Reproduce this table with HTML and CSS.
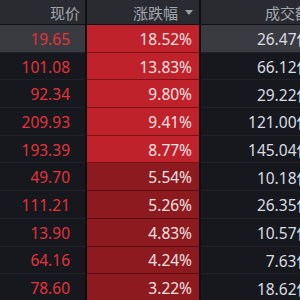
FILE: index.html
```html
<!DOCTYPE html>
<html lang="zh">
<head>
<meta charset="utf-8">
<link rel="stylesheet" href="styles.css">
</head>
<body>
<div class="table">
  <div class="hd c1">现价</div>
  <div class="hd c2">涨跌幅<svg class="sort" width="8" height="5" viewBox="0 0 8 5"><path d="M0 0H8L4 5Z" fill="#9a9ea6"/></svg></div>
  <div class="hd c3">成交额</div>

  <div class="cell c1 price sel">19.65</div>
  <div class="cell c2 up hot">18.52%</div>
  <div class="cell c3 amt sel">26.47亿</div>

  <div class="cell c1 price">101.08</div>
  <div class="cell c2 up hot">13.83%</div>
  <div class="cell c3 amt">66.12亿</div>

  <div class="cell c1 price">92.34</div>
  <div class="cell c2 up hot">9.80%</div>
  <div class="cell c3 amt">29.22亿</div>

  <div class="cell c1 price">209.93</div>
  <div class="cell c2 up hot">9.41%</div>
  <div class="cell c3 amt">121.00亿</div>

  <div class="cell c1 price">193.39</div>
  <div class="cell c2 up hot">8.77%</div>
  <div class="cell c3 amt">145.04亿</div>

  <div class="cell c1 price">49.70</div>
  <div class="cell c2 up warm">5.54%</div>
  <div class="cell c3 amt">10.18亿</div>

  <div class="cell c1 price">111.21</div>
  <div class="cell c2 up warm">5.26%</div>
  <div class="cell c3 amt">26.35亿</div>

  <div class="cell c1 price">13.90</div>
  <div class="cell c2 up warm">4.83%</div>
  <div class="cell c3 amt">10.57亿</div>

  <div class="cell c1 price">64.16</div>
  <div class="cell c2 up warm">4.24%</div>
  <div class="cell c3 amt">7.63亿</div>

  <div class="cell c1 price">78.60</div>
  <div class="cell c2 up warm">3.22%</div>
  <div class="cell c3 amt">18.62亿</div>
</div>
</body>
</html>
```

FILE: styles.css
```css
html, body {
  margin: 0;
  padding: 0;
  background: #16181d;
  overflow: hidden;
  width: 300px;
  height: 300px;
}
.table {
  display: grid;
  grid-template-columns: 85px 112px 120px;
  column-gap: 2px;
  background: #0e0f12;
  width: 321px;
  font-family: "Noto Sans", "Noto Sans CJK SC", sans-serif;
  font-size: 15.5px;
}
.hd {
  height: 24px;
  border-bottom: 1px solid #111215;
  background: #2a2b30;
  color: #a3a7af;
  display: flex;
  align-items: center;
  justify-content: flex-end;
  font-family: "Noto Sans CJK SC", sans-serif;
  font-size: 15px;
}
.hd.c1 { padding-right: 5px; }
.hd.c2 { padding-right: 6px; }
.hd.c3 { padding-right: 11px; }
.sort { margin-left: 7px; }
.cell {
  border-bottom: 1px solid #1f2126;
  background: #16181d;
  display: flex;
  align-items: center;
  justify-content: flex-end;
  padding-top: 1px;
  box-sizing: border-box;
  height: 27.7px;
}
.cell.c1 { padding-right: 15px; }
.cell.c2 { padding-right: 7px; }
.cell.c3 { padding-right: 9px; }
.cell.sel { background: #3a3b41; }
.price { color: #e5323b; }
.amt { color: #d9dde3; }
.up { color: #f3e1e1; }
.hot { background: #c0222b; border-bottom-color: #7a1218; }
.warm { background: #8c1a1f; border-bottom-color: #5a0c10; }
```
